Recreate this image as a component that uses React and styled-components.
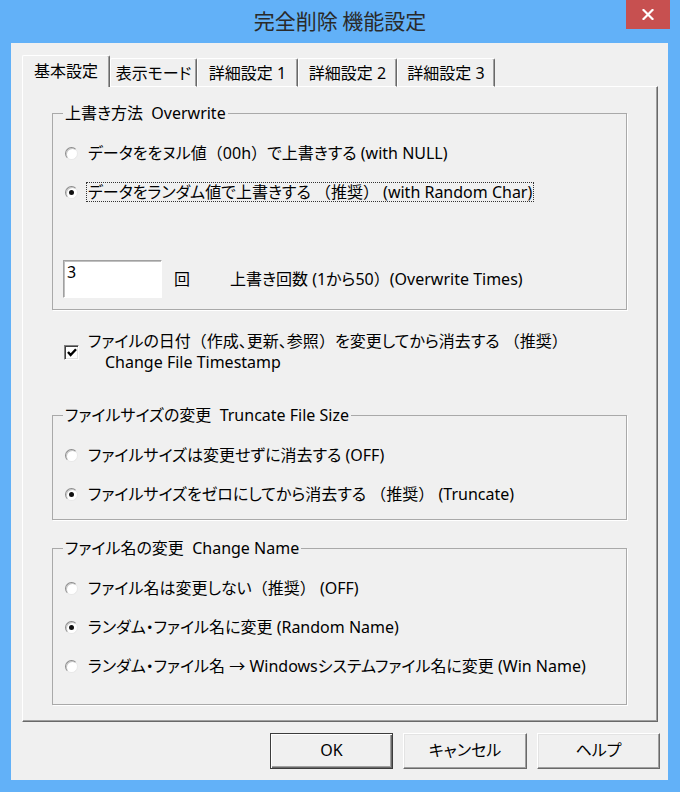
import React from 'react';
import styled, { createGlobalStyle } from 'styled-components';

const Global = createGlobalStyle`
  html, body { margin: 0; padding: 0; background: #62B1F8; }
  body {
    font-family: "Noto Sans", "Open Sans", "Noto Sans CJK JP", sans-serif;
    font-feature-settings: "palt" 1;
    color: #000;
  }
  * { box-sizing: border-box; }
`;

const Window = styled.div`
  width: 680px;
  height: 792px;
  background: #62B1F8;
  display: flex;
  flex-direction: column;
`;

const TitleBar = styled.div`
  height: 43px;
  flex: none;
  display: grid;
  grid-template-columns: 1fr auto 1fr;
  align-items: start;
`;

const Title = styled.div`
  grid-column: 2;
  padding-top: 7px;
  font-family: "Noto Sans CJK JP", sans-serif;
  font-feature-settings: normal;
  font-size: 21px;
  line-height: 26px;
  color: #2a2a2a;
`;

const CloseButton = styled.div`
  grid-column: 3;
  justify-self: end;
  margin-right: 10px;
  width: 44px;
  height: 29px;
  background: #C75050;
  display: flex;
  align-items: center;
  justify-content: center;
`;

const Client = styled.div`
  flex: 1;
  margin: 0 12px 12px 11px;
  background: #F0F0F0;
  display: flex;
  flex-direction: column;
  padding: 12px 8px 11px 11px;
`;

const TabRow = styled.div`
  display: flex;
  align-items: flex-end;
  height: 32px;
  margin-bottom: -1px;
  position: relative;
  z-index: 1;
`;

const Tab = styled.div`
  width: ${p => p.$w}px;
  height: ${p => (p.$active ? 32 : 29)}px;
  background: #F0F0F0;
  border-top: 1px solid #FFFFFF;
  border-left: 1px solid #FFFFFF;
  border-right: 1px solid #696969;
  border-bottom: ${p => (p.$active ? 'none' : '1px solid #FFFFFF')};
  box-shadow: inset -1px 0 0 #A0A0A0;
  border-radius: 2px 2px 0 0;
  display: flex;
  align-items: center;
  justify-content: center;
  font-size: 16px;
  line-height: 20px;
  padding-bottom: ${p => (p.$active ? 2 : 0)}px;
  white-space: nowrap;
`;

const Panel = styled.div`
  flex: 1;
  margin-right: 2px;
  border-top: 1px solid #FFFFFF;
  border-left: 1px solid #FFFFFF;
  border-right: 1px solid #696969;
  border-bottom: 1px solid #696969;
  box-shadow: inset -1px -1px 0 #A0A0A0;
  padding: 16px 30px 0 29px;
  display: flex;
  flex-direction: column;
`;

const Group = styled.fieldset`
  margin: ${p => p.$mt}px 0 0 0;
  padding: ${p => p.$pt}px 12px ${p => p.$pb}px 12px;
  border: 1px solid #A9A9A9;
  box-shadow: 1px 1px 0 #FFFFFF;
  min-width: 0;
  display: flex;
  flex-direction: column;
  gap: ${p => p.$gap}px;
`;

const Legend = styled.legend`
  padding: 0 2px;
  margin-left: -2px;
  font-size: 16px;
  line-height: 20px;
  white-space: pre;
`;

const Full = styled.span`
  font-feature-settings: normal;
`;

const RadioRow = styled.div`
  display: flex;
  align-items: center;
  height: 20px;
  gap: 8px;
`;

const RadioCircle = styled.span`
  width: 13px;
  height: 13px;
  flex: none;
  border-radius: 50%;
  background: #FFFFFF;
  border: 1px solid;
  border-color: #8C8C8C #E8E8E8 #E8E8E8 #8C8C8C;
  box-shadow: inset 1px 1px 0 #C8C8C8;
  display: flex;
  align-items: center;
  justify-content: center;
  &::after {
    content: '';
    width: 5px;
    height: 5px;
    border-radius: 50%;
    background: ${p => (p.$checked ? '#111' : 'transparent')};
  }
`;

const LabelText = styled.span`
  font-size: 16px;
  line-height: 18px;
  padding: 0 1px;
  border: 1px ${p => (p.$focus ? 'dotted #333' : 'solid transparent')};
  white-space: pre;
`;

const CountRow = styled.div`
  display: flex;
  align-items: center;
  margin-top: 39px;
  margin-left: -2px;
  font-size: 16px;
  line-height: 20px;
`;

const Field = styled.div`
  width: 99px;
  height: 38px;
  background: #FFFFFF;
  border: 1px solid;
  border-color: #A0A0A0 #FFFFFF #FFFFFF #A0A0A0;
  box-shadow: inset 1px 1px 0 #C0C0C0;
  padding: 1px 3px;
  font-size: 16px;
  line-height: 20px;
`;

const Unit = styled.span`
  margin-left: 12px;
`;

const CountLabel = styled.span`
  margin-left: 40px;
  white-space: pre;
`;

const CheckRow = styled.div`
  display: flex;
  align-items: center;
  margin-top: 21px;
  margin-left: 12px;
  gap: 9px;
`;

const CheckBox = styled.span`
  width: 15px;
  height: 15px;
  flex: none;
  background: #FFFFFF;
  border: 1px solid;
  border-color: #808080 #FFFFFF #FFFFFF #808080;
  box-shadow: inset 1px 1px 0 #404040, inset -1px -1px 0 #E3E3E3;
  display: flex;
  align-items: center;
  justify-content: center;
`;

const CheckText = styled.div`
  display: flex;
  flex-direction: column;
  font-size: 16px;
  line-height: 21px;
  white-space: pre;
`;

const SubLine = styled.span`
  padding-left: 17px;
`;

const ButtonRow = styled.div`
  display: flex;
  justify-content: flex-end;
  gap: 10px;
  margin-top: 11px;
`;

const Button = styled.div`
  width: ${p => p.$w}px;
  height: 36px;
  background: #F0F0F0;
  border: 1px solid;
  border-color: ${p => (p.$default ? '#3C3C3C' : '#FFFFFF #696969 #696969 #FFFFFF')};
  box-shadow: ${p =>
    p.$default
      ? 'inset 1px 1px 0 #FFFFFF, inset -1px -1px 0 #696969, inset -2px -2px 0 #A0A0A0'
      : 'inset -1px -1px 0 #A0A0A0, inset 1px 1px 0 #E3E3E3'};
  display: flex;
  align-items: center;
  justify-content: center;
  font-size: 16px;
  line-height: 20px;
  padding-bottom: 2px;
`;

const Radio = ({ checked, focus, children }) => (
  <RadioRow>
    <RadioCircle $checked={checked} />
    <LabelText $focus={focus}>{children}</LabelText>
  </RadioRow>
);

export default function App() {
  return (
    <>
      <Global />
      <Window>
        <TitleBar>
          <Title>完全削除 機能設定</Title>
          <CloseButton>
            <svg width="12" height="11" viewBox="0 0 12 11">
              <path d="M1.5 1 L10.5 10 M10.5 1 L1.5 10" stroke="#fff" strokeWidth="2.2" strokeLinecap="square" />
            </svg>
          </CloseButton>
        </TitleBar>
        <Client>
          <TabRow>
            <Tab $w={88} $active>基本設定</Tab>
            <Tab $w={87}>表示モード</Tab>
            <Tab $w={101}>詳細設定 1</Tab>
            <Tab $w={99}>詳細設定 2</Tab>
            <Tab $w={98}>詳細設定 3</Tab>
          </TabRow>
          <Panel>
            <Group $mt={0} $pt={20} $pb={11} $gap={19}>
              <Legend>上書き方法  Overwrite</Legend>
              <Radio>データををヌル値<Full>（</Full>00h<Full>）</Full>で上書きする (with NULL)</Radio>
              <Radio checked focus>データをランダム値で上書きする <Full>（</Full>推奨<Full>）</Full> (with Random Char)</Radio>
              <CountRow>
                <Field>3</Field>
                <Unit>回</Unit>
                <CountLabel>上書き回数 (1から50<Full>）</Full>(Overwrite Times)</CountLabel>
              </CountRow>
            </Group>
            <CheckRow>
              <CheckBox>
                <svg width="10" height="9" viewBox="0 0 10 9">
                  <path d="M1 4 L3.6 7 L9 1.2" fill="none" stroke="#000" strokeWidth="2.4" />
                </svg>
              </CheckBox>
              <CheckText>
                <span>ファイルの日付<Full>（</Full>作成、更新、参照<Full>）</Full>を変更してから消去する <Full>（</Full>推奨<Full>）</Full></span>
                <SubLine>Change File Timestamp</SubLine>
              </CheckText>
            </CheckRow>
            <Group $mt={32} $pt={20} $pb={15} $gap={19}>
              <Legend>ファイルサイズの変更  Truncate File Size</Legend>
              <Radio>ファイルサイズは変更せずに消去する (OFF)</Radio>
              <Radio checked>ファイルサイズをゼロにしてから消去する <Full>（</Full>推奨<Full>）</Full> (Truncate)</Radio>
            </Group>
            <Group $mt={18} $pt={20} $pb={28} $gap={19}>
              <Legend>ファイル名の変更  Change Name</Legend>
              <Radio>ファイル名は変更しない<Full>（</Full>推奨<Full>）</Full> (OFF)</Radio>
              <Radio checked>ランダム・ファイル名に変更 (Random Name)</Radio>
              <Radio>ランダム・ファイル名 → Windowsシステムファイル名に変更 (Win Name)</Radio>
            </Group>
          </Panel>
          <ButtonRow>
            <Button $w={123} $default>OK</Button>
            <Button $w={124}>キャンセル</Button>
            <Button $w={123}>ヘルプ</Button>
          </ButtonRow>
        </Client>
      </Window>
    </>
  );
}
